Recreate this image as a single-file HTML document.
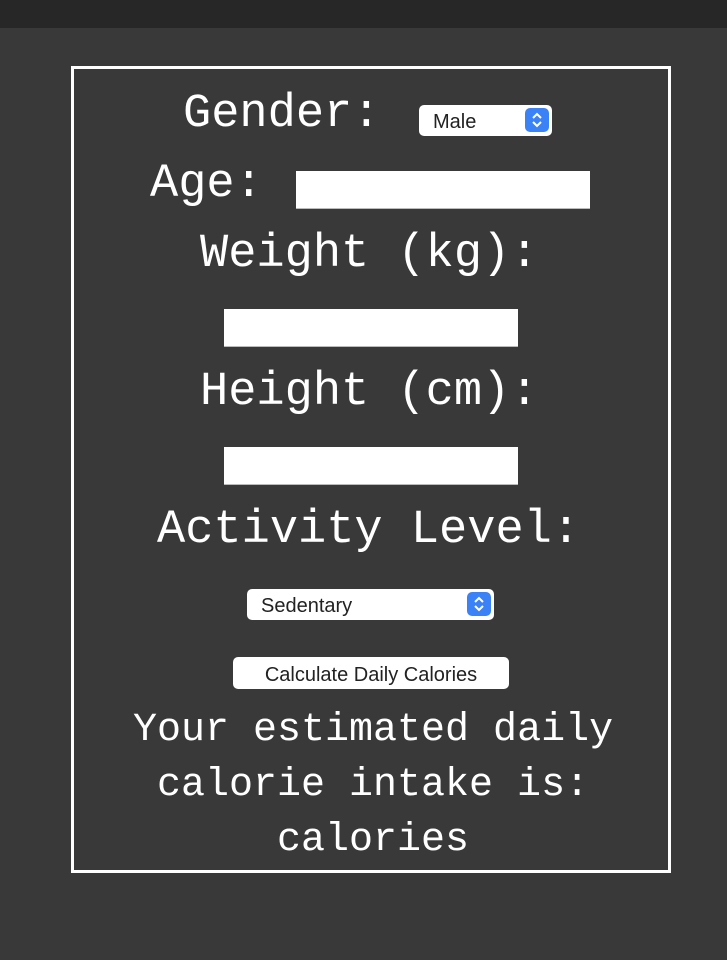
<!DOCTYPE html>
<html><head><meta charset="utf-8"><style>
html,body{margin:0;padding:0;}
body{width:727px;height:960px;background:#393939;position:relative;overflow:hidden;font-family:"Liberation Sans",sans-serif;}
.bar{position:absolute;left:0;top:0;width:727px;height:28px;background:#272727;}
.box{position:absolute;left:71px;top:66px;width:594px;height:801px;border:3px solid #fff;}
.t{position:absolute;color:#fff;font-family:"Liberation Mono",monospace;font-size:47px;line-height:47px;white-space:pre;}
.s{font-size:40px;line-height:40px;}
.in{position:absolute;background:#fff;border-bottom:1px solid #bbb;}
.sel{position:absolute;background:#fff;border-radius:5px;font-size:20px;color:#222;box-sizing:border-box;}
.sel span{position:absolute;left:14px;top:6px;}
.arr{position:absolute;right:3px;top:3px;width:24px;height:24px;border-radius:5px;background:#3b82f6;}
.btn{position:absolute;background:#fff;border-radius:5px;font-size:20px;color:#222;text-align:center;line-height:37px;}
</style></head><body>
<div class="bar"></div>
<div class="box"></div>
<div class="t" style="left:183px;top:91px">Gender:</div>
<div class="sel" style="left:419px;top:105px;width:133px;height:31px"><span>Male</span><div class="arr"><svg width="24" height="24"><path d="M8 10l4-4 4 4M8 14l4 4 4-4" stroke="#fff" stroke-width="2" fill="none"/></svg></div></div>
<div class="t" style="left:150px;top:161px">Age:</div>
<div class="in" style="left:296px;top:171px;width:294px;height:37px"></div>
<div class="t" style="left:200px;top:231px">Weight (kg):</div>
<div class="in" style="left:224px;top:309px;width:294px;height:37px"></div>
<div class="t" style="left:200px;top:369px">Height (cm):</div>
<div class="in" style="left:224px;top:447px;width:294px;height:37px"></div>
<div class="t" style="left:157px;top:507px">Activity Level:</div>
<div class="sel" style="left:247px;top:589px;width:247px;height:31px"><span>Sedentary</span><div class="arr"><svg width="24" height="24"><path d="M8 10l4-4 4 4M8 14l4 4 4-4" stroke="#fff" stroke-width="2" fill="none"/></svg></div></div>
<div class="btn" style="left:233px;top:657px;width:276px;height:32px">Calculate Daily Calories</div>
<div class="t s" style="left:133px;top:711px">Your estimated daily</div>
<div class="t s" style="left:157px;top:766px">calorie intake is:</div>
<div class="t s" style="left:277px;top:821px">calories</div>
</body></html>
